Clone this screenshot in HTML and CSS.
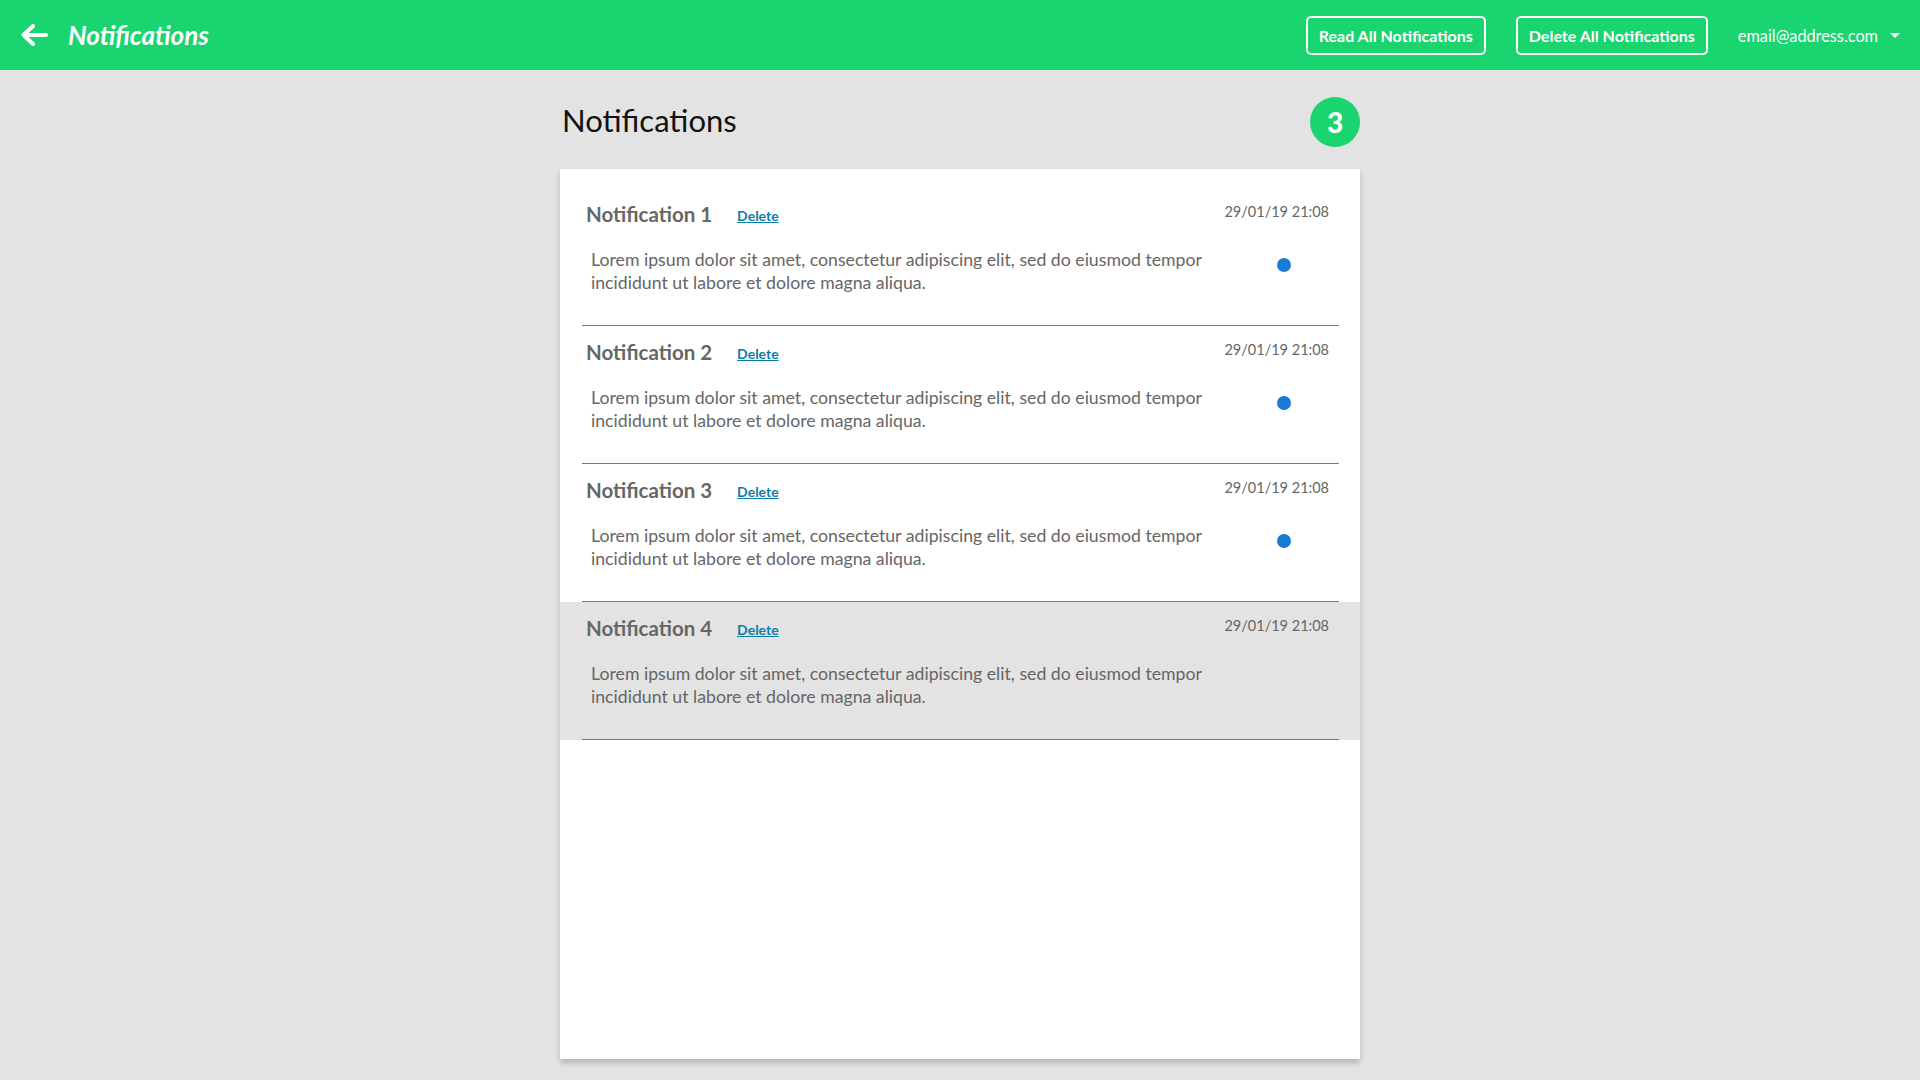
FILE: index.html
```html
<!DOCTYPE html>
<html>
<head>
<meta charset="utf-8">
<title>Notifications</title>
<link rel="stylesheet" href="styles.css">
</head>
<body>
<header class="topbar">
  <div class="topbar-left">
    <svg class="back" viewBox="0 0 28 24" width="28" height="24"><path d="M26 12H4 M13 3L3.5 12 13 21" fill="none" stroke="#fff" stroke-width="4" stroke-linecap="round" stroke-linejoin="round"/></svg>
    <span class="app-title">Notifications</span>
  </div>
  <div class="topbar-right">
    <button class="hbtn">Read All Notifications</button>
    <button class="hbtn">Delete All Notifications</button>
    <div class="user">email@address.com <span class="caret"></span></div>
  </div>
</header>
<main class="main">
  <div class="head">
    <h1 class="page-title">Notifications</h1>
    <span class="badge">3</span>
  </div>
  <section class="card">
    <div class="item">
      <div class="item-head">
        <span class="item-title">Notification 1</span>
        <a class="del" href="#">Delete</a>
        <span class="date">29/01/19 21:08</span>
      </div>
      <div class="item-body">
        <p class="text">Lorem ipsum dolor sit amet, consectetur adipiscing elit, sed do eiusmod tempor incididunt ut labore et dolore magna aliqua.</p>
        <span class="dot"></span>
      </div>
    </div>
    <div class="item">
      <div class="item-head">
        <span class="item-title">Notification 2</span>
        <a class="del" href="#">Delete</a>
        <span class="date">29/01/19 21:08</span>
      </div>
      <div class="item-body">
        <p class="text">Lorem ipsum dolor sit amet, consectetur adipiscing elit, sed do eiusmod tempor incididunt ut labore et dolore magna aliqua.</p>
        <span class="dot"></span>
      </div>
    </div>
    <div class="item">
      <div class="item-head">
        <span class="item-title">Notification 3</span>
        <a class="del" href="#">Delete</a>
        <span class="date">29/01/19 21:08</span>
      </div>
      <div class="item-body">
        <p class="text">Lorem ipsum dolor sit amet, consectetur adipiscing elit, sed do eiusmod tempor incididunt ut labore et dolore magna aliqua.</p>
        <span class="dot"></span>
      </div>
    </div>
    <div class="item read">
      <div class="item-head">
        <span class="item-title">Notification 4</span>
        <a class="del" href="#">Delete</a>
        <span class="date">29/01/19 21:08</span>
      </div>
      <div class="item-body">
        <p class="text">Lorem ipsum dolor sit amet, consectetur adipiscing elit, sed do eiusmod tempor incididunt ut labore et dolore magna aliqua.</p>
      </div>
    </div>
  </section>
</main>
</body>
</html>
```
FILE: styles.css
```css
* { box-sizing: border-box; }
html, body { margin: 0; padding: 0; }
body {
  background: #e3e3e3;
  font-family: Lato, "Open Sans", sans-serif;
  color: #666;
  height: 1080px;
  overflow: hidden;
}
.topbar {
  height: 70px;
  background: #1ad46f;
  display: flex;
  align-items: center;
  justify-content: space-between;
  padding: 0 20px;
}
.topbar-left { display: flex; align-items: center; }
.back { display: block; margin-right: 20px; }
.app-title {
  color: #fff;
  font-style: italic;
  font-weight: 700;
  font-size: 26px;
}
.topbar-right { display: flex; align-items: center; gap: 30px; }
.hbtn {
  height: 39px;
  background: transparent;
  border: 2px solid #fff;
  border-radius: 5px;
  color: #fff;
  font-family: Lato, sans-serif;
  font-weight: 700;
  font-size: 16px;
  padding: 0 11px;
}
.user {
  color: #fff;
  font-size: 16.3px;
  display: flex;
  align-items: center;
}
.caret {
  display: inline-block;
  margin-left: 12px;
  width: 0; height: 0;
  border-left: 5px solid transparent;
  border-right: 5px solid transparent;
  border-top: 5px solid #fff;
}
.main { width: 800px; margin: 0 auto; }
.head {
  display: flex;
  align-items: center;
  justify-content: space-between;
  padding: 27px 0 22px 2px;
}
.page-title {
  margin: 0 0 5px;
  font-weight: 400;
  font-size: 31px;
  color: #111;
}
.badge {
  width: 50px; height: 50px;
  border-radius: 50%;
  background: #1ad46f;
  color: #fff;
  font-weight: 900;
  font-size: 28px;
  display: flex;
  align-items: center;
  justify-content: center;
}
.card {
  background: #fff;
  height: 890px;
  padding-top: 19px;
  box-shadow: 0 4px 6px rgba(0,0,0,0.2);
}
.item {
  padding: 14px 31px 32px 26px;
  position: relative;
}
.item::after {
  content: "";
  position: absolute;
  left: 22px; right: 21px; bottom: 0;
  border-bottom: 1px solid #777;
}
.item.read { background: #e3e3e3; }
.item-head {
  display: flex;
  align-items: center;
  height: 24px;
}
.item-title {
  font-weight: 700;
  font-size: 20.5px;
  color: #666;
}
.del {
  margin-left: 25px;
  margin-top: 3px;
  color: #0b7ea8;
  font-weight: 700;
  font-size: 14px;
  text-decoration: underline;
}
.date {
  margin-left: auto;
  margin-top: -6px;
  font-size: 14.5px;
  color: #666;
}
.item-body {
  display: flex;
  align-items: flex-start;
  margin-top: 22px;
  padding-left: 5px;
}
.text {
  margin: 0;
  width: 660px;
  font-size: 17.7px;
  line-height: 23px;
  color: #666;
}
.dot {
  width: 14px; height: 14px;
  border-radius: 50%;
  background: #1a7bd6;
  margin-left: 26px;
  margin-top: 10px;
}
```
